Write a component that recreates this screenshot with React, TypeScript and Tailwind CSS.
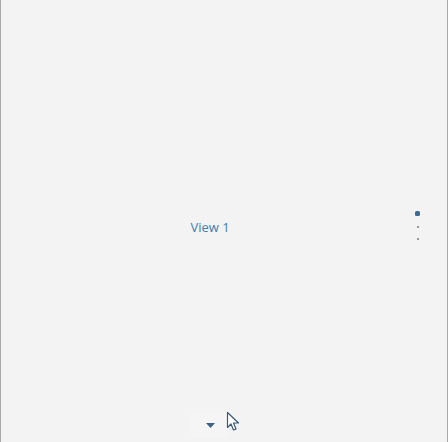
export default function App() {
  const views = [true, false, false];
  return (
    <div
      className="relative flex h-[442px] w-[448px] flex-col border-x border-[#a9a9a9] bg-[#f3f3f3]"
      style={{ fontFamily: '"Open Sans", "Noto Sans", sans-serif' }}
    >
      <div className="flex flex-1 items-center justify-center pr-[28px] pt-[44px]">
        <span className="text-[13px] text-[#437cab]">View 1</span>
      </div>

      {/* pager dots */}
      <div className="absolute right-[27px] top-[211px] flex w-[5px] flex-col items-center gap-[10px]">
        {views.map((active, i) =>
          active ? (
            <span key={i} className="h-[5px] w-[5px] rounded-[1.5px] bg-[#3f6b94]" />
          ) : (
            <span key={i} className="h-[2px] w-[2px] bg-[#8795a5]" />
          )
        )}
      </div>

      <div className="flex h-[30px] items-start justify-center pb-[4px]">
        <button className="ml-[-28px] flex h-[26px] w-[38px] items-center justify-center bg-[#f5f5f5]">
          <svg width="9" height="5" viewBox="0 0 9 5">
            <path d="M0 0h9L4.5 5z" fill="#3f6287" />
          </svg>
        </button>
      </div>

      {/* mouse cursor */}
      <svg
        className="absolute left-[225px] top-[411px]"
        width="14"
        height="21"
        viewBox="0 0 14 21"
      >
        <path
          d="M1.5 1.5v15l3.5-3.5 2.5 6 2.5-1-2.5-6h5z"
          fill="#fff"
          stroke="#3b5878"
          strokeWidth="1.2"
          strokeLinejoin="round"
        />
      </svg>
    </div>
  );
}
